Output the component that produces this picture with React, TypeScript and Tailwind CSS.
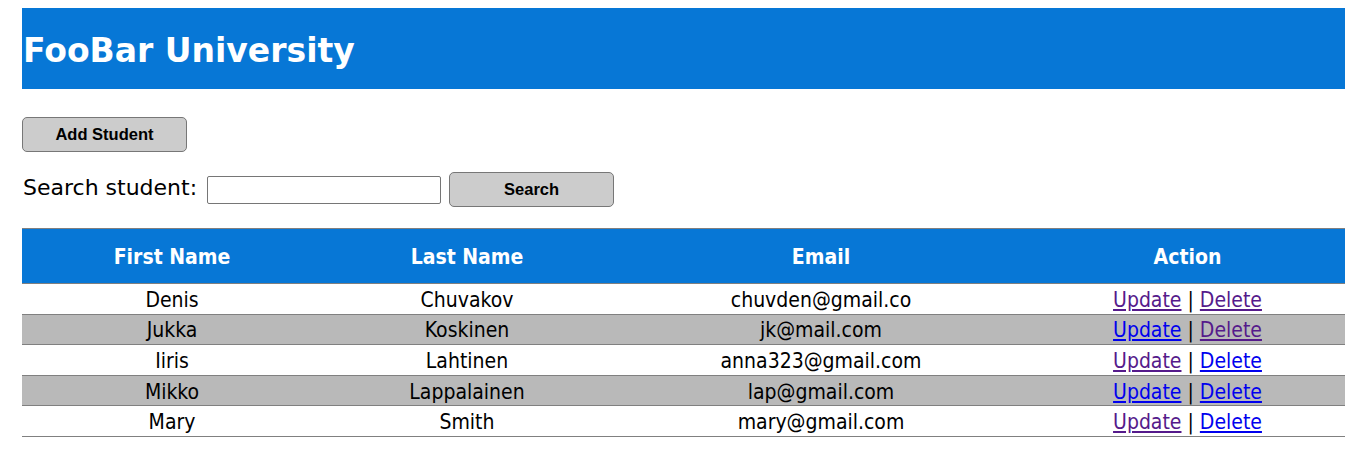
const students = [
  { first: 'Denis', last: 'Chuvakov', email: 'chuvden@gmail.co', upd: true, del: true },
  { first: 'Jukka', last: 'Koskinen', email: 'jk@mail.com', upd: false, del: true },
  { first: 'Iiris', last: 'Lahtinen', email: 'anna323@gmail.com', upd: true, del: false },
  { first: 'Mikko', last: 'Lappalainen', email: 'lap@gmail.com', upd: false, del: false },
  { first: 'Mary', last: 'Smith', email: 'mary@gmail.com', upd: true, del: false },
];

const tableFont = { fontFamily: '"DejaVu Sans Condensed", "DejaVu Sans", sans-serif' };

export default function App() {
  return (
    <div className="bg-white min-h-screen pt-2 px-[22px] pr-[13px] text-black" style={{ fontFamily: '"DejaVu Sans", Verdana, sans-serif' }}>
      <div className="bg-[#0777d6] h-[81px] flex items-center pl-[1px] pt-[3px]">
        <h1 className="text-[33px] font-bold text-white leading-none">FooBar University</h1>
      </div>

      <button className="mt-[28px] w-[165px] h-[35px] bg-[#cccccc] border border-[#777] rounded-[5px] text-[16.5px] font-bold [font-family:'Liberation_Sans',Arial,sans-serif]">
        Add Student
      </button>

      <div className="mt-[20px] flex items-center">
        <span className="text-[22px] ml-[1px] mr-[10px] leading-none -mt-[4px]">Search student:</span>
        <input className="w-[234px] h-[28px] border border-[#767676] rounded-[2px] outline-none" />
        <button className="ml-[8px] w-[165px] h-[35px] bg-[#cccccc] border border-[#777] rounded-[5px] text-[16.5px] font-bold [font-family:'Liberation_Sans',Arial,sans-serif]">
          Search
        </button>
      </div>

      <table className="mt-[21px] w-full border-collapse text-[21px]" style={tableFont}>
        <thead>
          <tr className="bg-[#0777d6] text-white border-t border-b border-[#808080] h-[55px]">
            <th className="w-[300px] font-bold pt-[3px]">First Name</th>
            <th className="w-[290px] font-bold pt-[3px]">Last Name</th>
            <th className="w-[418px] font-bold pt-[3px]">Email</th>
            <th className="font-bold pt-[3px]">Action</th>
          </tr>
        </thead>
        <tbody>
          {students.map((s, i) => (
            <tr key={s.email} className={`border-b border-[#808080] h-[30.6px] ${i % 2 === 1 ? 'bg-[#b9b9b9]' : 'bg-white'}`}>
              <td className="text-center leading-none pt-[3px] pb-0">{s.first}</td>
              <td className="text-center leading-none pt-[3px] pb-0">{s.last}</td>
              <td className="text-center leading-none pt-[3px] pb-0">{s.email}</td>
              <td className="text-center leading-none pt-[3px] pb-0">
                <a href="#" className={`underline ${s.upd ? 'text-[#551a8b]' : 'text-[#0000ee]'}`}>Update</a>
                {' | '}
                <a href="#" className={`underline ${s.del ? 'text-[#551a8b]' : 'text-[#0000ee]'}`}>Delete</a>
              </td>
            </tr>
          ))}
        </tbody>
      </table>
    </div>
  );
}
